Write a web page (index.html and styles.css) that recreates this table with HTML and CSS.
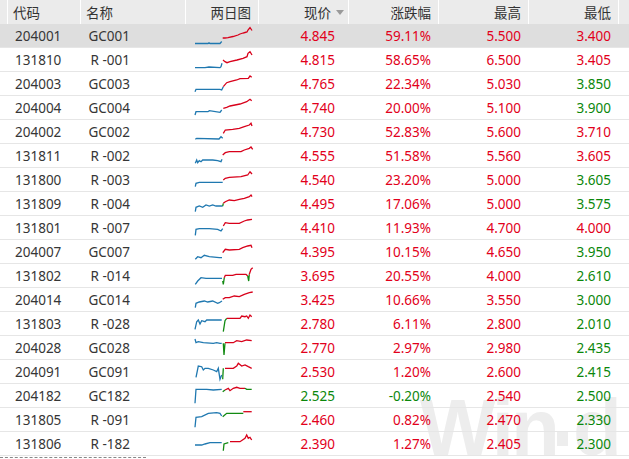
FILE: index.html
```html
<!DOCTYPE html>
<html lang="zh-CN">
<head>
<meta charset="utf-8">
<title>回购行情</title>
<link rel="stylesheet" href="styles.css">
</head>
<body>
<div class="board">
  <div class="watermark" aria-hidden="true">Win<span class="wm-dot"></span>d</div>
  <div class="table">
    <div class="row head">
      <div class="c"></div>
      <div class="c l">代码</div>
      <div class="c l">名称</div>
      <div class="c r">两日图</div>
      <div class="c r price">现价<span class="sort"></span></div>
      <div class="c r">涨跌幅</div>
      <div class="c r">最高</div>
      <div class="c r">最低</div>
      <div class="c"></div>
    </div>

    <div class="row sel">
      <div class="c"></div><div class="c code">204001</div><div class="c nm"><span>GC001</span></div>
      <div class="c chart"><svg viewBox="0 0 58 18"><polyline class="b" points="0,16.5 13,16.5 14,15.8 15,16.5 25,16.5 26.7,14.5"/><polyline class="u" points="27.7,11 30,11 33,10.7 38,9.5 43,8 45,7 48,6 50,5.5 52,5 53,3 55,0.5 57,3.5"/></svg></div>
      <div class="c num up pr">4.845</div><div class="c num up">59.11%</div><div class="c num up">5.500</div><div class="c num up">3.400</div><div class="c"></div>
    </div>

    <div class="row">
      <div class="c"></div><div class="c code">131810</div><div class="c nm"><span>R -001</span></div>
      <div class="c chart"><svg viewBox="0 0 58 18"><polyline class="b" points="0,16.7 10,16.7 14,16 25,16.7 26,15.7 27,12.3"/><polyline class="u" points="28,9 30,10.7 32,11.7 35,10.7 42,9 48,7.3 52,5.7 53,2.3 55,0.7 57,4"/></svg></div>
      <div class="c num up pr">4.815</div><div class="c num up">58.65%</div><div class="c num up">6.500</div><div class="c num up">3.405</div><div class="c"></div>
    </div>

    <div class="row">
      <div class="c"></div><div class="c code">204003</div><div class="c nm"><span>GC003</span></div>
      <div class="c chart"><svg viewBox="0 0 58 18"><polyline class="b" points="0,16.7 1,14.3 25,14.3 26.7,15 28.3,11.7"/><polyline class="u" points="28.3,11.7 31.7,7.7 35,6.7 41.7,5 45,3.7 53.3,3.3 55,1 56.7,2.3"/></svg></div>
      <div class="c num up pr">4.765</div><div class="c num up">22.34%</div><div class="c num up">5.030</div><div class="c num dn">3.850</div><div class="c"></div>
    </div>

    <div class="row">
      <div class="c"></div><div class="c code">204004</div><div class="c nm"><span>GC004</span></div>
      <div class="c chart"><svg viewBox="0 0 58 18"><polyline class="b" points="0,16 1,12.7 13,12.7 14.3,11.7 25,13.3 26.7,11"/><polyline class="u" points="28.3,9.3 31.7,8.3 35,7 45,5 51.7,2.7 55,0.3 56.7,1.7"/></svg></div>
      <div class="c num up pr">4.740</div><div class="c num up">20.00%</div><div class="c num up">5.100</div><div class="c num dn">3.900</div><div class="c"></div>
    </div>

    <div class="row">
      <div class="c"></div><div class="c code">204002</div><div class="c nm"><span>GC002</span></div>
      <div class="c chart"><svg viewBox="0 0 58 18"><polyline class="b" points="0.3,16.3 1.7,15.3 24,16 26,13.7 27.7,15.3"/><polyline class="u" points="28.3,10.3 30.3,7 37.7,6.3 44.3,5.3 49.3,3.7 54.3,2 56,0.3 57,3"/></svg></div>
      <div class="c num up pr">4.730</div><div class="c num up">52.83%</div><div class="c num up">5.600</div><div class="c num up">3.710</div><div class="c"></div>
    </div>

    <div class="row">
      <div class="c"></div><div class="c code">131811</div><div class="c nm"><span>R -002</span></div>
      <div class="c chart"><svg viewBox="0 0 58 18"><polyline class="b" points="0.3,16.3 1.7,13 2.7,15.7 4.3,13.7 6,14.7 7.7,13 17.7,13 22.7,13.7 26,14.7 27,12.3"/><polyline class="u" points="27.7,8 30.3,5.7 34.3,4.7 46,4.7 49.3,3 54.3,1.3 56,0 57.7,2.3"/></svg></div>
      <div class="c num up pr">4.555</div><div class="c num up">51.58%</div><div class="c num up">5.560</div><div class="c num up">3.605</div><div class="c"></div>
    </div>

    <div class="row">
      <div class="c"></div><div class="c code">131800</div><div class="c nm"><span>R -003</span></div>
      <div class="c chart"><svg viewBox="0 0 58 18"><polyline class="b" points="0.3,15.7 1,12.3 4.3,11.3 27.7,11.3"/><polyline class="u" points="28.3,9 30.3,7.3 34.3,6.3 46,5.7 52.7,4 55,0.7 57,3"/></svg></div>
      <div class="c num up pr">4.540</div><div class="c num up">23.20%</div><div class="c num up">5.000</div><div class="c num dn">3.605</div><div class="c"></div>
    </div>

    <div class="row">
      <div class="c"></div><div class="c code">131809</div><div class="c nm"><span>R -004</span></div>
      <div class="c chart"><svg viewBox="0 0 58 18"><polyline class="b" points="0.3,16.7 1,12.3 4.3,11 7.7,12.3 11,10 14.3,11 17.7,10 21,11 27.7,11"/><polyline class="d" points="27.7,11 28.3,8.3"/><polyline class="u" points="28.3,8.3 30.3,6.7 34.3,5 39.3,5.7 44.3,4.3 49.3,3.3 54.3,1.7 56,0 57,1.7"/></svg></div>
      <div class="c num up pr">4.495</div><div class="c num up">17.06%</div><div class="c num up">5.000</div><div class="c num dn">3.575</div><div class="c"></div>
    </div>

    <div class="row">
      <div class="c"></div><div class="c code">131801</div><div class="c nm"><span>R -007</span></div>
      <div class="c chart"><svg viewBox="0 0 58 18"><polyline class="b" points="0.3,16.3 1,10.3 4.3,9.7 14.3,9.7 22.7,10.3 26,12 27.7,9.7"/><polyline class="u" points="28.3,7 30.3,3.7 34.3,4.3 44.3,4.3 49.3,2 52.7,1 57,0.3"/></svg></div>
      <div class="c num up pr">4.410</div><div class="c num up">11.93%</div><div class="c num up">4.700</div><div class="c num up">4.000</div><div class="c"></div>
    </div>

    <div class="row">
      <div class="c"></div><div class="c code">204007</div><div class="c nm"><span>GC007</span></div>
      <div class="c chart"><svg viewBox="0 0 58 18"><polyline class="b" points="0.3,16.3 2.7,13.7 6,14.7 9.3,12.3 14.3,13.7 24.3,14.7 27,14.7"/><polyline class="u" points="27.7,9.7 30.3,6.3 34.3,7 44.3,6.3 47.7,4.7 52.7,3 56,2.3 57,4.7"/></svg></div>
      <div class="c num up pr">4.395</div><div class="c num up">10.15%</div><div class="c num up">4.650</div><div class="c num dn">3.950</div><div class="c"></div>
    </div>

    <div class="row">
      <div class="c"></div><div class="c code">131802</div><div class="c nm"><span>R -014</span></div>
      <div class="c chart"><svg viewBox="0 0 58 18"><polyline class="b" points="0.3,17.3 2.7,14 6,10.7 11,11.3 17.7,11.3 27,11.3"/><polyline class="d" points="27.7,14 28.3,17.3 29.3,10.7"/><polyline class="u" points="29.3,10.7 30.3,8.3 37.7,8.3 41,7.3 51,7.3 52.7,9"/><polyline class="d" points="52.7,9 53.7,14 54.3,7.3"/><polyline class="u" points="54.3,7.3 56,2.3 57.7,0.7"/></svg></div>
      <div class="c num up pr">3.695</div><div class="c num up">20.55%</div><div class="c num up">4.000</div><div class="c num dn">2.610</div><div class="c"></div>
    </div>

    <div class="row">
      <div class="c"></div><div class="c code">204014</div><div class="c nm"><span>GC014</span></div>
      <div class="c chart"><svg viewBox="0 0 58 18"><polyline class="b" points="0.3,16.7 1,12.3 4.3,11 9.3,10 12.7,11 17.7,10 22.7,12.3 24.3,11.7 27,10"/><polyline class="u" points="27.7,8.3 30.3,6.7 34.3,6.7 39.3,5 44.3,5.7 49.3,3.3 54.3,1.7 57.7,1"/></svg></div>
      <div class="c num up pr">3.425</div><div class="c num up">10.66%</div><div class="c num up">3.550</div><div class="c num dn">3.000</div><div class="c"></div>
    </div>

    <div class="row">
      <div class="c"></div><div class="c code">131803</div><div class="c nm"><span>R -028</span></div>
      <div class="c chart"><svg viewBox="0 0 58 18"><polyline class="b" points="0,14.3 1.7,6.7 3.3,5 5,9 6.7,5.7 10,6.7 11.7,5 26.7,5"/><polyline class="d" points="28.3,16.7 30,5.7 31.7,3.3"/><polyline class="u" points="31.7,3.3 45,3.3 46.7,1 50,1.7 51.7,1 53.3,3.3 55,0 56.7,1.7"/></svg></div>
      <div class="c num up pr">2.780</div><div class="c num up">6.11%</div><div class="c num up">2.800</div><div class="c num dn">2.010</div><div class="c"></div>
    </div>

    <div class="row">
      <div class="c"></div><div class="c code">204028</div><div class="c nm"><span>GC028</span></div>
      <div class="c chart"><svg viewBox="0 0 58 18"><polyline class="b" points="0,0 1,3.7 3.3,2.7 8.3,3.7 18.3,4.3 21.7,3.7 25,4.3 26.7,4.3"/><polyline class="d" points="28.3,4.3 29,16 30,4.3"/><polyline class="u" points="30,3.7 38.3,3.7 41.7,1.7 46.7,2.7 51.7,1 56.7,1.7"/></svg></div>
      <div class="c num up pr">2.770</div><div class="c num up">2.97%</div><div class="c num up">2.980</div><div class="c num dn">2.435</div><div class="c"></div>
    </div>

    <div class="row">
      <div class="c"></div><div class="c code">204091</div><div class="c nm"><span>GC091</span></div>
      <div class="c chart"><svg viewBox="0 0 58 18"><polyline class="b" points="1,14.3 3.3,3 6.7,3.7 8.3,7 10,5.3 13.3,5.3 18.3,7 21.7,8.7 23.3,5.3 25,16.3 26.7,12"/><polyline class="d" points="27.7,16.3 28.3,5.3"/><polyline class="u" points="30,5.3 38.3,5.3 41.7,3 43.3,0.3 46.7,3 50,2 53.3,3.7 56.7,5.3"/></svg></div>
      <div class="c num up pr">2.530</div><div class="c num up">1.20%</div><div class="c num up">2.600</div><div class="c num dn">2.415</div><div class="c"></div>
    </div>

    <div class="row">
      <div class="c"></div><div class="c code">204182</div><div class="c nm"><span>GC182</span></div>
      <div class="c chart"><svg viewBox="0 0 58 18"><polyline class="b" points="0,16.3 1,2.3 11.7,2.3 18.3,3 26.7,2.3"/><polyline class="d" points="27.7,4.7 30,3"/><polyline class="u" points="30,3 33.3,1.3 35,3.7 38.3,1.3 41.7,0.3 45,1.3 50,1.3"/><polyline class="d" points="50,1.3 51.7,2.3 56.7,2.3"/></svg></div>
      <div class="c num dn pr">2.525</div><div class="c num dn">-0.20%</div><div class="c num up">2.540</div><div class="c num dn">2.500</div><div class="c"></div>
    </div>

    <div class="row">
      <div class="c"></div><div class="c code">131805</div><div class="c nm"><span>R -091</span></div>
      <div class="c chart"><svg viewBox="0 0 58 18"><polyline class="b" points="0,16.3 1,6.3 6.7,5.7 13.3,2.3 21.7,1.7 25,2.3 26.7,5"/><polyline class="d" points="27.7,5.7 31.7,2.3 48.3,2.3"/><polyline class="u" points="48.3,0.7 53.3,0.7 56.7,0.7"/></svg></div>
      <div class="c num up pr">2.460</div><div class="c num up">0.82%</div><div class="c num up">2.470</div><div class="c num dn">2.330</div><div class="c"></div>
    </div>

    <div class="row last">
      <div class="c"></div><div class="c code">131806</div><div class="c nm"><span>R -182</span></div>
      <div class="c chart"><svg viewBox="0 0 58 18"><polyline class="b" points="0,10 6.7,10 10,9 15,7.7 26.7,7.7"/><polyline class="d" points="28.3,15.7 29,9 33.3,7.7"/><polyline class="u" points="35,6.7 45,6.7 50,3.3 51.7,0 53.3,3.3 55,2.3 56.7,5"/></svg></div>
      <div class="c num up pr">2.390</div><div class="c num up">1.27%</div><div class="c num up">2.405</div><div class="c num dn">2.300</div><div class="c"></div>
    </div>
    <div class="focus-line"></div>
  </div>
</div>
</body>
</html>
```

FILE: styles.css
```css
* { box-sizing: border-box; }

html, body {
  margin: 0;
  padding: 0;
  background: #ffffff;
}

body {
  font-family: "Noto Sans", "Noto Sans CJK SC", sans-serif;
  font-size: 13.5px;
  color: #363636;
  overflow: hidden;
}

.board {
  position: relative;
  width: 629px;
  height: 459px;
  overflow: hidden;
}

.watermark {
  position: absolute;
  left: 420px;
  top: 388px;
  z-index: 0;
  font-family: "Liberation Sans", Arial, sans-serif;
  font-weight: bold;
  font-size: 80px;
  line-height: 1;
  letter-spacing: -3px;
  color: #ededed;
  white-space: nowrap;
}

.wm-dot {
  display: inline-block;
  width: 11px;
  height: 14px;
  margin: 0 5px 0 0;
  vertical-align: 9px;
  background: #ededed;
}

.table {
  position: relative;
  z-index: 1;
}

.row {
  display: grid;
  grid-template-columns: 8px 73px 105px 73px 90px 90px 90px 90px 10px;
  height: 24px;
  align-items: center;
  border-bottom: 1px solid #e6e6e6;
  white-space: nowrap;
}

.row.head {
  background: #ebebeb;
  border-bottom: none;
  color: #333333;
}

.row.head .c {
  height: 24px;
  display: flex;
  align-items: center;
  border-right: 1px solid #ffffff;
}

.row.head .c:last-child { border-right: none; }

.row.head .l { justify-content: flex-start; padding-left: 5px; }
.row.head .r { justify-content: flex-end; padding-right: 7px; }
.row.head .price { padding-right: 4px; }

.sort {
  display: inline-block;
  width: 0;
  height: 0;
  margin-left: 5px;
  border-left: 4px solid transparent;
  border-right: 4px solid transparent;
  border-top: 5px solid #9a9a9a;
}

.row.sel { background: #dedede; }

.c { overflow: hidden; }

.code { padding-left: 7px; }

.nm { padding-left: 6px; }
.nm span {
  display: inline-block;
  width: 43px;
  text-align: right;
}

.chart {
  align-self: start;
  padding: 3px 0 0 9px;
  height: 23px;
}

.chart svg {
  display: block;
  width: 58px;
  height: 18px;
  overflow: visible;
}

.chart polyline {
  fill: none;
  stroke-width: 1.3;
  stroke-linejoin: miter;
}

.chart .b { stroke: #1f78b0; }
.chart .u { stroke: #d8001a; }
.chart .d { stroke: #128a12; }

.num { text-align: right; padding-right: 8px; }
.num.pr { padding-right: 14px; }

.up { color: #e2001b; }
.dn { color: #0b870b; }

.focus-line {
  width: 146px;
  height: 1px;
  margin-top: 1px;
  border-top: 1px dashed #888888;
}
```
